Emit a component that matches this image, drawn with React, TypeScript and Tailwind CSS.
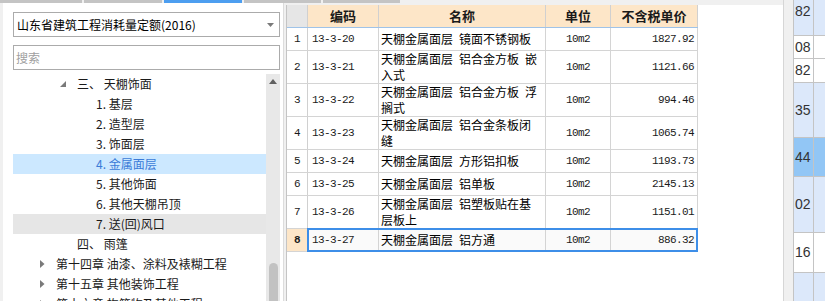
import React from 'react';

type Row = { no: number; code: string; name: string[]; unit: string; price: string; h: string };

const sp = '\u2002';

const rows: Row[] = [
  { no: 1, code: '13-3-20', name: [`天棚金属面层${sp}镜面不锈钢板`], unit: '10m2', price: '1827.92', h: 'h-[23px]' },
  { no: 2, code: '13-3-21', name: [`天棚金属面层${sp}铝合金方板${sp}嵌`, '入式'], unit: '10m2', price: '1121.66', h: 'h-[33px]' },
  { no: 3, code: '13-3-22', name: [`天棚金属面层${sp}铝合金方板${sp}浮`, '搁式'], unit: '10m2', price: '994.46', h: 'h-[33px]' },
  { no: 4, code: '13-3-23', name: [`天棚金属面层${sp}铝合金条板闭`, '缝'], unit: '10m2', price: '1065.74', h: 'h-[33px]' },
  { no: 5, code: '13-3-24', name: [`天棚金属面层${sp}方形铝扣板`], unit: '10m2', price: '1193.73', h: 'h-[23px]' },
  { no: 6, code: '13-3-25', name: [`天棚金属面层${sp}铝单板`], unit: '10m2', price: '2145.13', h: 'h-[23px]' },
  { no: 7, code: '13-3-26', name: [`天棚金属面层${sp}铝塑板贴在基`, '层板上'], unit: '10m2', price: '1151.01', h: 'h-[33px]' },
  { no: 8, code: '13-3-27', name: [`天棚金属面层${sp}铝方通`], unit: '10m2', price: '886.32', h: 'h-[23px]' },
];

const sideRows = [
  { v: '82', h: 'h-[36px]', bg: 'bg-[#dce8fa]', top: true },
  { v: '08', h: 'h-[23px]', bg: 'bg-white' },
  { v: '82', h: 'h-[24px]', bg: 'bg-white' },
  { v: '35', h: 'h-[55px]', bg: 'bg-[#dce8fa]' },
  { v: '44', h: 'h-[39px]', bg: 'bg-[#92c6f5]' },
  { v: '02', h: 'h-[56px]', bg: 'bg-[#dce8fa]' },
  { v: '16', h: 'h-[40px]', bg: 'bg-white' },
  { v: '', h: 'h-[40px]', bg: 'bg-[#dce8fa]' },
];

const Expanded = () => (
  <svg width="6" height="6" viewBox="0 0 6 6" className="shrink-0">
    <polygon points="6,0 6,6 0,6" fill="#7a7a7a" />
  </svg>
);

const Collapsed = () => (
  <svg width="5" height="8" viewBox="0 0 5 8" className="shrink-0">
    <polygon points="0,0 4.5,4 0,8" fill="#7a7a7a" />
  </svg>
);

const mono = 'font-["Liberation_Mono",monospace] text-[11px] tracking-[-0.6px]';
const treeRow = 'h-[20px] shrink-0 flex items-center';

const App: React.FC = () => {
  return (
    <div className='w-[825px] h-[301px] bg-[#f0f0f0] overflow-hidden flex font-["Noto_Sans_CJK_SC",sans-serif] text-[#1a1a1a]'>
      {/* main area */}
      <div className="w-[783px] flex flex-col">
        <div className="h-[3px] flex gap-[2px] shrink-0">
          <div className="w-[82px] bg-[#c4c4c4]" />
          <div className="w-[78px] bg-[#c4c4c4]" />
          <div className="w-[78px] bg-[#4d9ef0]" />
          <div className="w-[77px] bg-[#c4c4c4]" />
          <div className="w-[77px] bg-[#c4c4c4]" />
        </div>

        <div className="flex flex-1 min-h-0">
          {/* Left tree panel */}
          <div className="ml-[3px] w-[281px] bg-white border-r border-[#dcdcdc] flex flex-col pl-[10px] pr-[3px] pt-[9px]">
            <div className="h-[25px] shrink-0 border border-[#ababab] flex items-center justify-between pl-[3px] pr-[5px] text-[12px] text-black">
              <span>山东省建筑工程消耗量定额(2016)</span>
              <svg width="7" height="4" viewBox="0 0 7 4">
                <polygon points="0,0 7,0 3.5,4" fill="#7a7a7a" />
              </svg>
            </div>
            <div className="mt-[8px] h-[25px] shrink-0 border border-[#ababab] flex items-center pl-[2px] text-[12px] text-[#a0a0a0]">
              搜索
            </div>
            <div className="mt-[4px] flex flex-1 min-h-0 overflow-hidden text-[12px]">
              <div className="w-[253px] flex flex-col">
                <div className={`${treeRow} pl-[47px]`}>
                  <Expanded />
                  <span className="ml-[11px]">三、 天棚饰面</span>
                </div>
                <div className={`${treeRow} pl-[83px]`}>1. 基层</div>
                <div className={`${treeRow} pl-[83px]`}>2. 造型层</div>
                <div className={`${treeRow} pl-[83px]`}>3. 饰面层</div>
                <div className={`${treeRow} pl-[83px] bg-[#cce8ff] text-[#3a7bd8]`}>4. 金属面层</div>
                <div className={`${treeRow} pl-[83px]`}>5. 其他饰面</div>
                <div className={`${treeRow} pl-[83px]`}>6. 其他天棚吊顶</div>
                <div className={`${treeRow} pl-[83px] bg-[#e6e6e6]`}>7. 送(回)风口</div>
                <div className={`${treeRow} pl-[64px]`}>四、 雨篷</div>
                <div className={`${treeRow} pl-[27px]`}>
                  <Collapsed />
                  <span className="ml-[11px]">第十四章 油漆、涂料及裱糊工程</span>
                </div>
                <div className={`${treeRow} pl-[27px]`}>
                  <Collapsed />
                  <span className="ml-[11px]">第十五章 其他装饰工程</span>
                </div>
                <div className={`${treeRow} pl-[27px]`}>
                  <Collapsed />
                  <span className="ml-[11px]">第十六章 构筑物及其他工程</span>
                </div>
              </div>
              {/* scrollbar */}
              <div className="w-[14px] bg-[#e8e8e8] flex flex-col items-center">
                <svg width="8" height="5" viewBox="0 0 8 5" className="mt-[5px] shrink-0">
                  <polygon points="0,5 8,5 4,0" fill="#606060" />
                </svg>
                <div className="flex-1" />
                <div className="w-[9px] h-[50px] shrink-0 rounded-t-[5px] bg-[#c2c2c2] -mb-[12px]" />
              </div>
            </div>
          </div>

          {/* Table pane */}
          <div className="ml-[2px] mt-[2px] flex-1 bg-white border-l border-[#c4c4c4] flex flex-col">
            <div className="w-[411px] shrink-0 grid grid-cols-[21px_71px_167px_65px_87px] h-[23px] border-b border-[#9fc3e8] text-[13px] font-bold">
              <div className="bg-[#e6e6e6] border-r border-[#d0d0d0]" />
              <div className="bg-[#fde6c8] border-r border-[#d0d0d0] flex items-center justify-center">编码</div>
              <div className="bg-[#fde6c8] border-r border-[#d0d0d0] flex items-center justify-center">名称</div>
              <div className="bg-[#fde6c8] border-r border-[#d0d0d0] flex items-center justify-center">单位</div>
              <div className="bg-[#fde6c8] border-r border-[#d0d0d0] flex items-center justify-center">不含税单价</div>
            </div>
            {rows.map((r) => {
              const sel = r.no === 8;
              return (
                <div
                  key={r.no}
                  className={`relative shrink-0 w-[411px] grid grid-cols-[21px_71px_167px_65px_87px] ${r.h} border-b border-[#d4d4d4] ${sel ? 'bg-[#fafafa]' : ''}`}
                >
                  <div
                    className={`border-r border-[#d0d0d0] flex items-center justify-center ${mono} ${sel ? 'bg-[#fde6c8] font-bold' : 'bg-white'}`}
                  >
                    {r.no}
                  </div>
                  <div className={`border-r border-[#d4d4d4] flex items-center pl-[4px] ${mono}`}>{r.code}</div>
                  <div className="border-r border-[#d4d4d4] flex flex-col justify-center pl-[2px] text-[12px] leading-[16px] text-black">
                    {r.name.map((l, i) => (
                      <span key={i} className="whitespace-pre leading-[16px] h-[16px]">{l}</span>
                    ))}
                  </div>
                  <div className={`border-r border-[#d4d4d4] flex items-center justify-center ${mono}`}>{r.unit}</div>
                  <div className={`border-r border-[#d4d4d4] flex items-center justify-end pr-[3px] ${mono}`}>{r.price}</div>
                  {sel && (
                    <div className="absolute left-[20px] -top-[1px] right-0 bottom-[-1px] border-2 border-[#3d8ee8] pointer-events-none" />
                  )}
                </div>
              );
            })}
          </div>
        </div>
      </div>

      {/* gutter */}
      <div className="w-[10px] bg-[#f0f0f0] border-l border-[#d6d6d6]" />

      {/* right grid */}
      <div className='flex-1 flex flex-col border-l border-[#c4c4c4] font-["Liberation_Sans",sans-serif] text-[14px] text-[#333]'>
        {sideRows.map((s, i) => (
          <div key={i} className={`${s.h} flex border-b border-[#c4c4c4] shrink-0 ${s.bg}`}>
            <div className={`w-[20px] border-r border-[#c4c4c4] flex pl-[1px] ${s.top ? 'items-start pt-[1px]' : 'items-center'}`}>
              {s.v}
            </div>
            <div className="flex-1" />
          </div>
        ))}
      </div>
    </div>
  );
};

export default App;
